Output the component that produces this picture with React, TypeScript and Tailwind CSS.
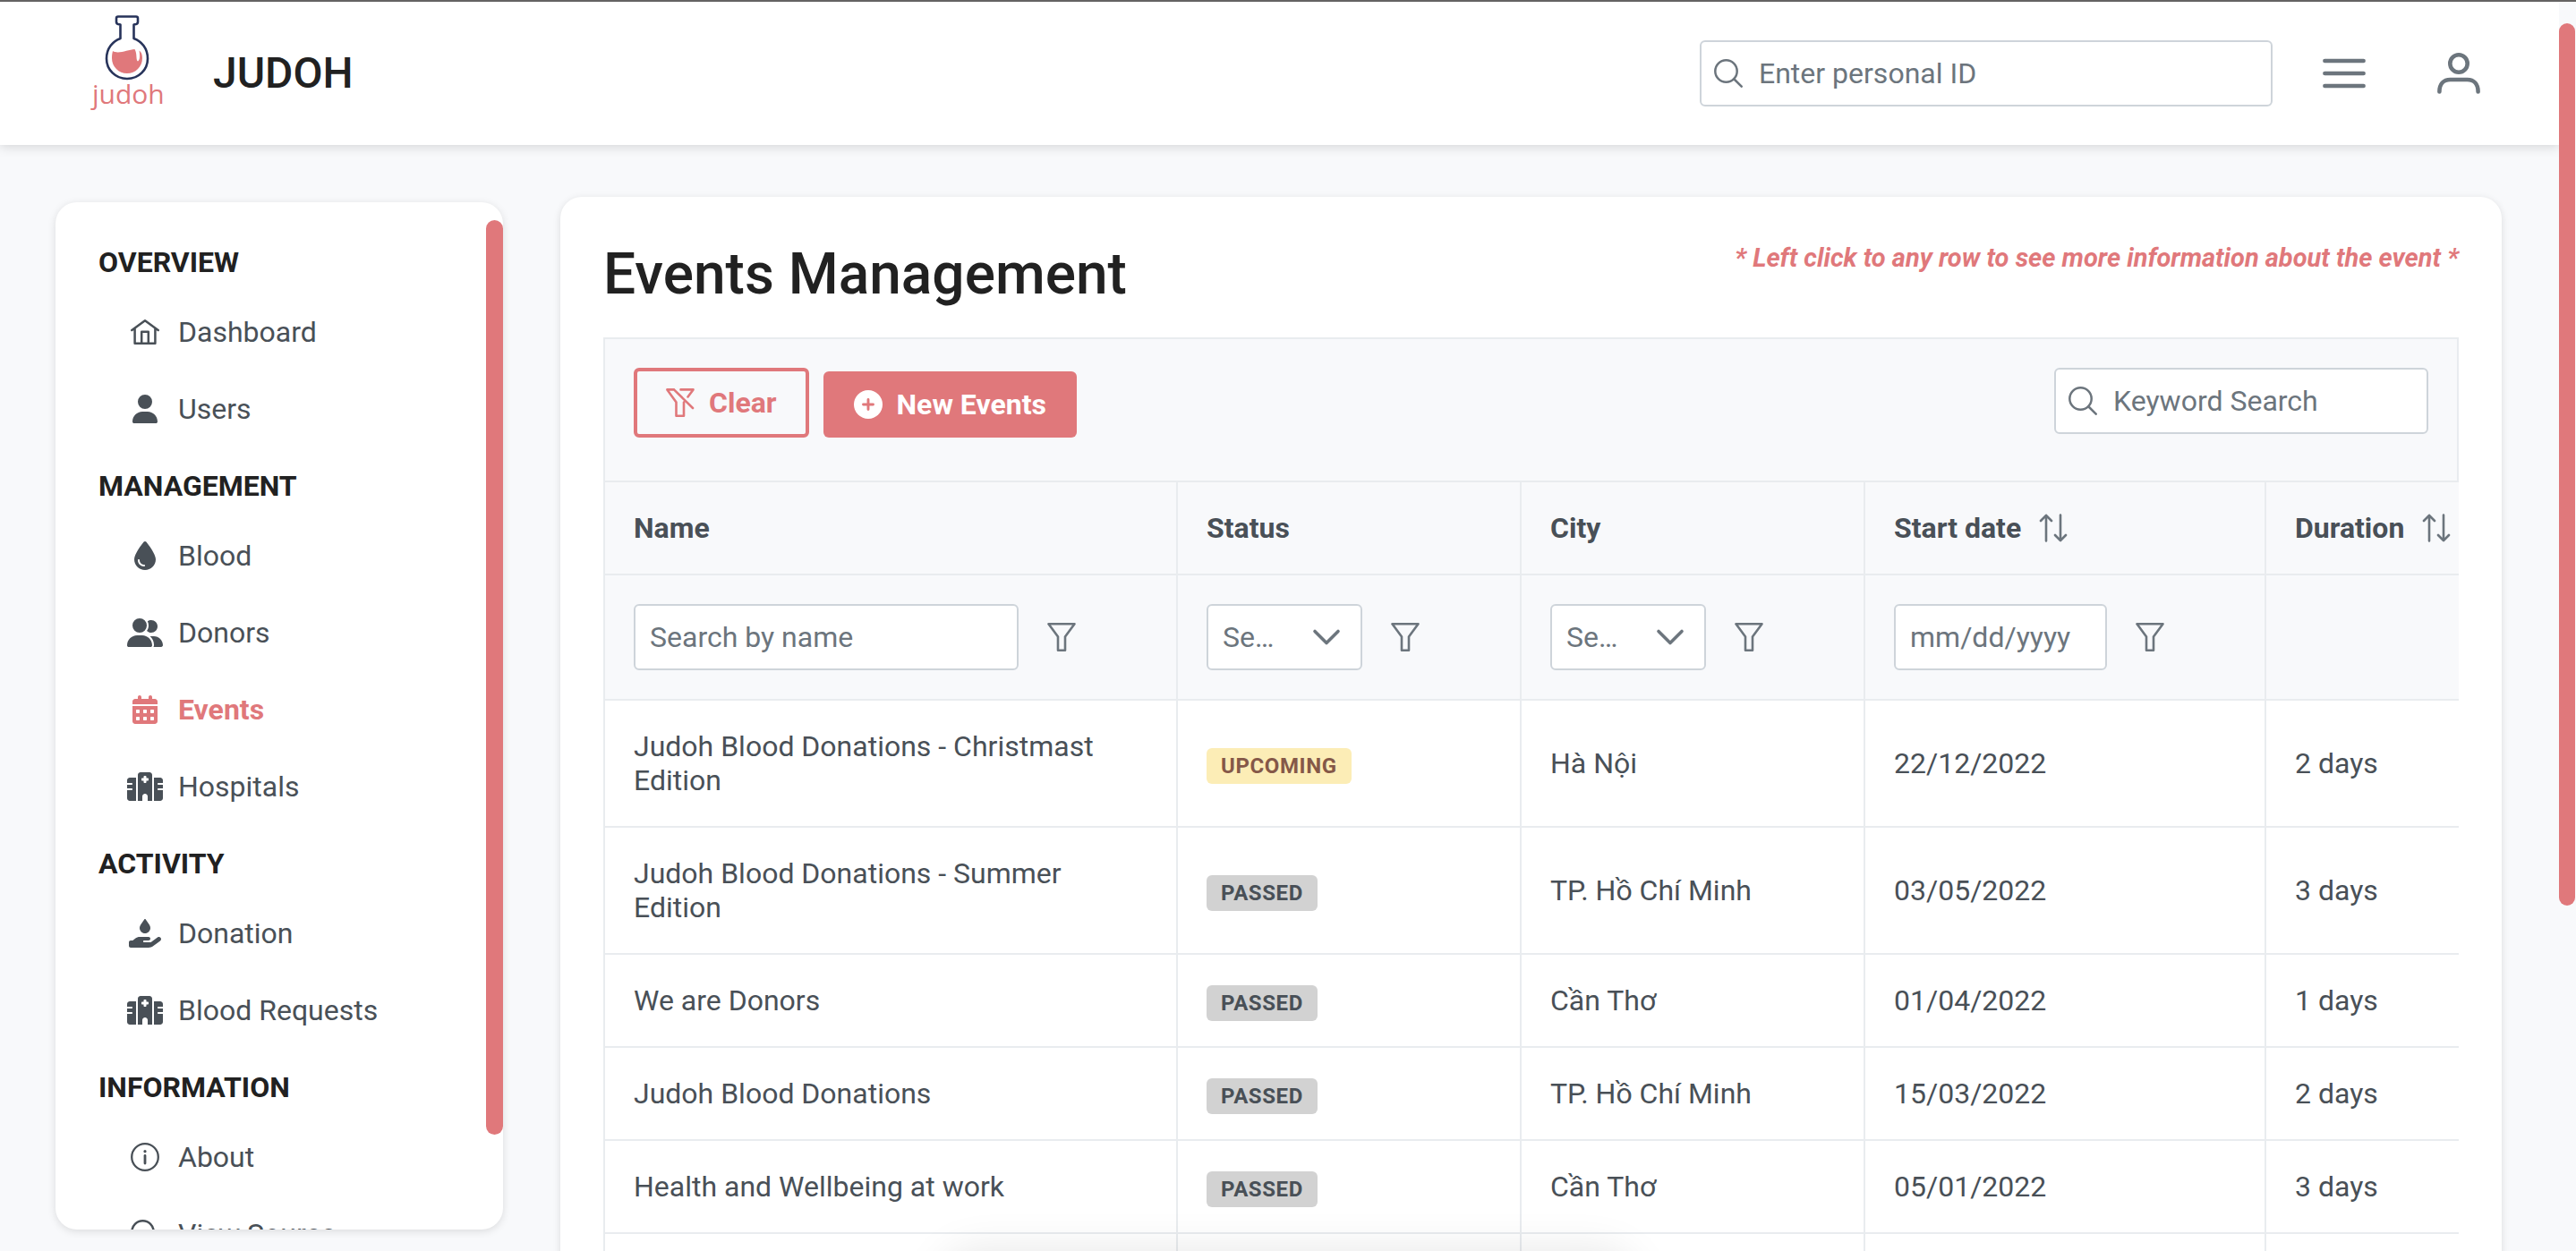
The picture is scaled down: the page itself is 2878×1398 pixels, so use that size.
import React from "react";
import { FaUser, FaUserGroup, FaDroplet, FaCalendarDays, FaHospital, FaHandHoldingDroplet } from "react-icons/fa6";

type IconProps = { className?: string };

function Svg({ className = "size-8", width = 2, children }: { className?: string; width?: number; children: React.ReactNode }) {
  return (
    <svg viewBox="0 0 32 32" fill="none" stroke="currentColor" strokeWidth={width} strokeLinecap="round" strokeLinejoin="round" className={className} aria-hidden="true">
      {children}
    </svg>
  );
}

const HomeIcon = ({ className }: IconProps) => (
  <Svg className={className} width={2.5}>
    <path d="M1.300 14 16 3.200 30.700 14M4.600 12V28.700H27.400V12M12.200 28.500V15.800H19.800V28.500" />
  </Svg>
);
const InfoIcon = ({ className }: IconProps) => (
  <Svg className={className} width={2.3}>
    <circle cx="16" cy="16" r="14.800" />
    <path d="M16 14.500V23" strokeWidth="2.800" />
    <path d="M16 9.500V9.700" strokeWidth="3.200" />
  </Svg>
);
const SearchIcon = ({ className }: IconProps) => (
  <Svg className={className} width={2.5}>
    <circle cx="13.500" cy="13.500" r="12.200" />
    <path d="M22.500 22.500 30.700 30.700" />
  </Svg>
);
const FilterIcon = ({ className }: IconProps) => (
  <Svg className={className} width={2.6}>
    <path d="M1.500 1.300H30.500L20 15.500V30.700H12V15.500Z" />
  </Svg>
);
const FilterSlashIcon = ({ className }: IconProps) => (
  <Svg className={className} width={2.6}>
    <path d="M16.500 1.400H30.500L24.500 9.500M9 1.400H1.400L11.500 15.500V30.700H20V15.500M9 1.400 30 22" />
  </Svg>
);
const SortIcon = ({ className }: IconProps) => (
  <Svg className={className} width={2.6}>
    <path d="M8 30.500V2M2 8 8 1.800 14 8M24 1.500V30M18 24 24 30.200 30 24" />
  </Svg>
);
const ChevronIcon = ({ className }: IconProps) => (
  <Svg className={className} width={3.6}>
    <path d="M3 9.500 16 22.500 29 9.500" />
  </Svg>
);
const PlusCircleIcon = ({ className }: IconProps) => (
  <svg viewBox="0 0 32 32" className={className} aria-hidden="true">
    <circle cx="16" cy="16" r="16" fill="currentColor" />
    <path d="M16 10.500V21.500M10.500 16H21.500" stroke="#e0787b" strokeWidth="2.900" strokeLinecap="round" />
  </svg>
);
const BarsIcon = ({ className }: IconProps) => (
  <svg viewBox="0 0 48 48" className={className} stroke="currentColor" strokeWidth="4.600" strokeLinecap="round" aria-hidden="true">
    <path d="M2.400 10H45.600M2.400 24H45.600M2.400 38H45.600" />
  </svg>
);
const PersonIcon = ({ className }: IconProps) => (
  <svg viewBox="0 0 48 48" className={className} fill="none" stroke="currentColor" strokeWidth="4.600" strokeLinecap="round" aria-hidden="true">
    <circle cx="24" cy="13" r="9.700" />
    <path d="M2.400 44.500C2.400 36 7 31 14.500 31H33.500C41 31 45.600 36 45.600 44.500" />
  </svg>
);

function Logo() {
  return (
    <svg viewBox="0 0 84 110" className="h-[110px] w-[84px] shrink-0" role="img" aria-label="judoh">
      <path
        d="M32 1.500H52Q54 1.500 54 3.500V7.500Q54 9.500 52 10L49.500 10.500V26C58 29 65 37 65 48.500C65 61 55 71 42 71S19 61 19 48.500C19 37 26 29 34.500 26V10.500L32 10Q30 9.500 30 7.500V3.500Q30 1.500 32 1.500Z"
        fill="#fff" stroke="#27335a" strokeWidth="2.600" strokeLinejoin="round"
      />
      <path d="M26 40C32 44 43 38.500 50.500 38C53.500 43 51.500 50 54 51.500C56.500 50 56.500 45 55.500 39.500C58 41 59 44 59 48C59 57.500 51.500 65 42 65S25 57.500 25 48C25 45 25.300 42.500 26 40Z" fill="#e0787b" />
      <text x="3" y="99" fontFamily="Open Sans, sans-serif" fontSize="30" fill="#e0787b">judoh</text>
    </svg>
  );
}

type NavItem = { label: string; icon: React.ReactNode; active?: boolean };
const nav: { title: string; items: NavItem[] }[] = [
  {
    title: "OVERVIEW",
    items: [
      { label: "Dashboard", icon: <HomeIcon className="size-8" /> },
      { label: "Users", icon: <FaUser /> },
    ],
  },
  {
    title: "MANAGEMENT",
    items: [
      { label: "Blood", icon: <FaDroplet /> },
      { label: "Donors", icon: <FaUserGroup className="w-10" /> },
      { label: "Events", icon: <FaCalendarDays />, active: true },
      { label: "Hospitals", icon: <FaHospital className="w-10" /> },
    ],
  },
  {
    title: "ACTIVITY",
    items: [
      { label: "Donation", icon: <FaHandHoldingDroplet className="w-9" /> },
      { label: "Blood Requests", icon: <FaHospital className="w-10" /> },
    ],
  },
  {
    title: "INFORMATION",
    items: [
      { label: "About", icon: <InfoIcon className="size-8" /> },
      { label: "View Source", icon: <SearchIcon className="size-8" /> },
    ],
  },
];

const events = [
  { name: "Judoh Blood Donations - Christmast Edition", status: "UPCOMING", city: "Hà Nội", start: "22/12/2022", duration: "2 days" },
  { name: "Judoh Blood Donations - Summer Edition", status: "PASSED", city: "TP. Hồ Chí Minh", start: "03/05/2022", duration: "3 days" },
  { name: "We are Donors", status: "PASSED", city: "Cần Thơ", start: "01/04/2022", duration: "1 days" },
  { name: "Judoh Blood Donations", status: "PASSED", city: "TP. Hồ Chí Minh", start: "15/03/2022", duration: "2 days" },
  { name: "Health and Wellbeing at work", status: "PASSED", city: "Cần Thơ", start: "05/01/2022", duration: "3 days" },
  { name: "", status: "", city: "", start: "", duration: "" },
];

const field = "h-[74px] rounded-md border-2 border-[#ced4da] bg-white text-[#6c757d] placeholder:text-[#6c757d] placeholder:opacity-100";
const cell = "border-b-2 border-l-2 border-[#e9ecef] px-8 py-8 text-left align-middle";

function SearchBox({ label, className }: { label: string; className: string }) {
  return (
    <div className={`relative ${className}`}>
      <SearchIcon className="absolute top-[21px] left-4 size-8 text-[#6c757d]" />
      <input type="text" aria-label={label} placeholder={label} className={`${field} block w-full pr-4 pl-16`} />
    </div>
  );
}

function FilterButton({ label }: { label: string }) {
  return (
    <button type="button" aria-label={label} className="text-[#6c757d]">
      <FilterIcon className="size-8" />
    </button>
  );
}

function SelectFilter({ label }: { label: string }) {
  return (
    <div className="flex items-center gap-8">
      <div className="relative w-[174px]">
        <select aria-label={label} className={`${field} block w-full appearance-none pr-20 pl-4`}>
          <option>Se…</option>
        </select>
        <ChevronIcon className="pointer-events-none absolute top-[21px] right-6 size-8 text-[#6c757d]" />
      </div>
      <FilterButton label={`${label} options`} />
    </div>
  );
}

function Header() {
  return (
    <header className="relative z-10 flex h-40 items-center bg-white pr-[88px] pl-[100px] shadow-[0_2px_12px_rgba(0,0,0,0.15)]">
      <a href="#home" className="flex items-center gap-[54px]">
        <div className="pb-5">
          <Logo />
        </div>
        <span className="text-5xl font-medium text-[#212121]">JUDOH</span>
      </a>
      <div className="ml-auto flex items-center">
        <SearchBox label="Enter personal ID" className="w-[640px]" />
        <button type="button" aria-label="Menu" className="ml-14 text-[#6c757d]">
          <BarsIcon className="size-12" />
        </button>
        <button type="button" aria-label="Profile" className="ml-20 text-[#6c757d]">
          <PersonIcon className="size-12" />
        </button>
      </div>
    </header>
  );
}

function Sidebar() {
  return (
    <aside className="flex h-[calc(100vh-250px)] w-[500px] shrink-0 overflow-hidden rounded-3xl bg-white shadow-[0_2px_10px_rgba(0,0,0,0.12)]">
      <nav className="min-w-0 flex-1 overflow-hidden pt-12 pl-12">
        {nav.map((group) => (
          <section key={group.title}>
            <h2 className="flex h-[38px] items-center font-bold text-[#212121]">{group.title}</h2>
            <ul className="pt-4 pb-6">
              {group.items.map((item) => (
                <li key={item.label}>
                  <a href="#nav" className={`flex h-[86px] items-center gap-[17px] pl-8 ${item.active ? "font-bold text-[#e0787b]" : "text-[#495057]"}`}>
                    <span className="flex w-10 justify-center">{item.icon}</span>
                    {item.label}
                  </a>
                </li>
              ))}
            </ul>
          </section>
        ))}
      </nav>
      <div className="w-[19px] pt-5">
        <div className="h-[1022px] rounded-full bg-[#e0787b]" />
      </div>
    </aside>
  );
}

function EventsTable() {
  return (
    <div className="overflow-hidden">
      <div className="flex items-start justify-between border-2 border-[#e9ecef] bg-[#f8f9fb] px-8 pt-8 pb-12">
        <div className="flex items-end gap-4 font-bold">
          <button type="button" className="flex h-[78px] items-center gap-4 rounded-md border-4 border-[#e0787b] px-8 text-[#e0787b]">
            <FilterSlashIcon className="size-8" />
            Clear
          </button>
          <button type="button" className="flex h-[74px] items-center gap-4 rounded-md bg-[#e0787b] px-[34px] text-white">
            <PlusCircleIcon className="size-8" />
            New Events
          </button>
        </div>
        <SearchBox label="Keyword Search" className="w-[418px]" />
      </div>
      <table className="w-[2320px] table-fixed border-separate border-spacing-0 text-[#495057]">
        <colgroup>
          <col className="w-[640px]" />
          <col className="w-96" />
          <col className="w-96" />
          <col className="w-[448px]" />
          <col />
        </colgroup>
        <thead className="bg-[#f8f9fb]">
          <tr>
            <th className={cell}>Name</th>
            <th className={cell}>Status</th>
            <th className={cell}>City</th>
            <th className={cell}>
              <span className="flex items-center gap-5">Start date <SortIcon className="size-8 text-[#6c757d]" /></span>
            </th>
            <th className={cell}>
              <span className="flex items-center gap-5">Duration <SortIcon className="size-8 text-[#6c757d]" /></span>
            </th>
          </tr>
          <tr>
            <td className={cell}>
              <div className="flex items-center gap-8">
                <input type="text" aria-label="Name" placeholder="Search by name" className={`${field} w-[430px] px-4`} />
                <FilterButton label="Name options" />
              </div>
            </td>
            <td className={cell}><SelectFilter label="Status" /></td>
            <td className={cell}><SelectFilter label="City" /></td>
            <td className={cell}>
              <div className="flex items-center gap-8">
                <input type="text" aria-label="Start date" placeholder="mm/dd/yyyy" className={`${field} w-[238px] px-4`} />
                <FilterButton label="Start date options" />
              </div>
            </td>
            <td className={cell} />
          </tr>
        </thead>
        <tbody>
          {events.map((event, i) => (
            <tr key={i}>
              <td className={cell}>{event.name}</td>
              <td className={cell}>
                {event.status && (
                  <span className={`-my-2 inline-block rounded-md px-4 py-1.5 text-2xl leading-7 font-bold tracking-wide ${event.status === "UPCOMING" ? "bg-[#fcedb6] text-[#855848]" : "bg-[#d2d2d2] text-[#495057]"}`}>
                    {event.status}
                  </span>
                )}
              </td>
              <td className={cell}>{event.city}</td>
              <td className={cell}>{event.start}</td>
              <td className={cell}>{event.duration}</td>
            </tr>
          ))}
        </tbody>
      </table>
    </div>
  );
}

export default function App() {
  return (
    <div className="relative flex h-screen overflow-hidden border-t-2 border-[#656363] bg-[#f8f9fb] font-[Roboto,sans-serif] text-[32px] leading-[38px]">
      <div className="min-w-0 flex-1">
        <Header />
        <div className="flex items-start gap-16 pr-16 pl-[62px]">
          <div className="pt-16">
            <Sidebar />
          </div>
          <main className="mt-[58px] min-w-0 flex-1 rounded-3xl bg-white px-12 pt-12 pb-12 shadow-[0_2px_8px_rgba(0,0,0,0.12)]">
            <div className="flex items-start justify-between pb-8">
              <h1 className="text-[64px] leading-[77px] font-medium text-[#212121]">Events Management</h1>
              <p className="text-[29px] leading-10 font-bold whitespace-nowrap text-[#e0787b] italic">
                * Left click to any row to see more information about the event *
              </p>
            </div>
            <EventsTable />
          </main>
        </div>
      </div>
      <div className="z-20 w-[19px] bg-[#f8f9fb] pt-6 pr-px">
        <div className="h-[986px] rounded-full bg-[#e0787b]" />
      </div>
      <div className="absolute top-full left-1/2 h-20 w-[27%] -translate-x-1/2 rounded-full shadow-[0_0_48px_rgba(0,0,0,0.1)]" />
    </div>
  );
}
